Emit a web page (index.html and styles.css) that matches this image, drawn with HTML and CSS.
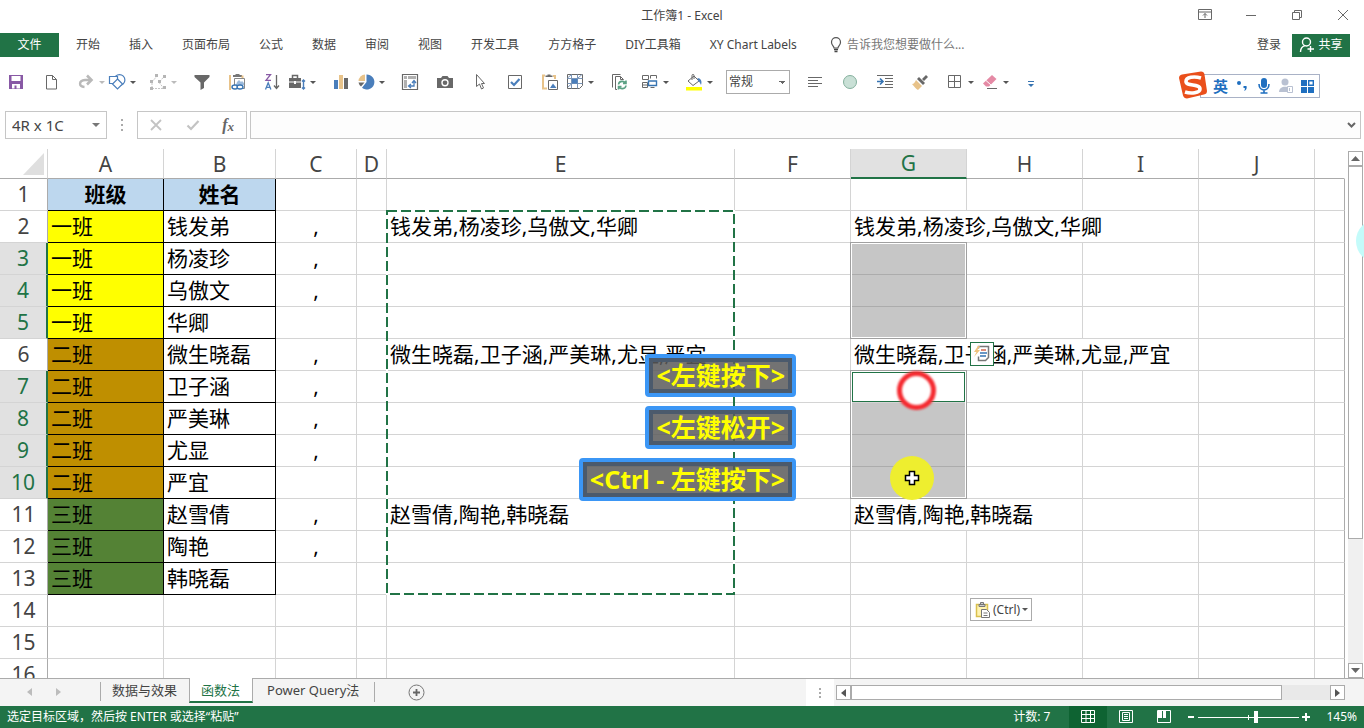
FILE: index.html
```html
<!DOCTYPE html>
<html lang="zh-CN">
<head>
<meta charset="utf-8">
<title>工作簿1 - Excel</title>
<link rel="stylesheet" href="styles.css">
</head>
<body>
<header class="titlebar">
  <h1 class="title">工作簿1 - Excel</h1>
  <div class="window-buttons">
    <button aria-label="功能区显示选项"><svg width="14" height="12" viewBox="0 0 14 12"><path d="M.5.5h13v10H.5zM.5 3h13M7 9V4.500M5 6.500l2-2 2 2" class="ln"/></svg></button>
    <button aria-label="最小化"><svg width="12" height="12" viewBox="0 0 12 12"><path d="M1 6.500h10" class="ln"/></svg></button>
    <button aria-label="还原"><svg width="12" height="12" viewBox="0 0 12 12"><path d="M1.500 3.500h7v7h-7zM3.500 3.500v-2h7v7h-2" class="ln"/></svg></button>
    <button aria-label="关闭"><svg width="12" height="12" viewBox="0 0 12 12"><path d="M1 1l10 10M11 1L1 11" class="ln"/></svg></button>
  </div>
</header>

<nav class="ribbon">
  <button class="file-tab">文件</button>
  <div class="ribbon-tabs">
    <button>开始</button><button>插入</button><button>页面布局</button><button>公式</button><button>数据</button><button>审阅</button><button>视图</button><button>开发工具</button><button>方方格子</button><button>DIY工具箱</button><button>XY Chart Labels</button>
    <button class="tell-me"><svg width="12" height="16" viewBox="0 0 12 16"><path d="M4 11C4 9 1.500 8.500 1.500 5.200a4.500 4.500 0 0 1 9 0C10.500 8.500 8 9 8 11z" fill="none" stroke="#555" stroke-width="1.200"/><path d="M4 12.500h4M4.500 14.500h3" fill="none" stroke="#444" stroke-width="1.300"/></svg>告诉我您想要做什么...</button>
  </div>
  <button class="login">登录</button>
  <button class="share"><svg width="16" height="16" viewBox="0 0 16 16"><g fill="none" stroke="#fff" stroke-width="1.400"><circle cx="7.500" cy="5" r="4"/><path d="M1.500 15c0-3.500 2-5.500 4.500-6.300M11.500 9v6M8.500 12h6.500"/></g></svg>共享</button>
</nav>

<div class="toolbar">
  <button class="tool" aria-label="保存"><svg width="18" height="18" viewBox="0 0 18 18"><path d="M2 2h14v14H2z" fill="#8859a5"/><path d="M4.500 3h9v5h-9zM5 11h8v4.500H9.500V12.500H7.500v3H5z" fill="#fff"/></svg></button>
  <button class="tool" aria-label="新建"><svg width="18" height="18" viewBox="0 0 18 18"><path d="M4.500 2.500h6l4 4v9.500h-10zM10.500 2.500v4h4" class="ln"/></svg></button>
  <button class="tool tool-snug" aria-label="重做"><svg width="18" height="18" viewBox="0 0 18 18"><path d="M13 7H8C1.500 7.500 1.500 13.500 7.500 14" fill="none" stroke="#b9b9b9" stroke-width="2.400"/><path d="M10 2.500L14.500 7 10 11.500" fill="none" stroke="#b9b9b9" stroke-width="2.600"/></svg><i class="caret caret-off"></i></button>
  <button class="tool tool-split-s" aria-label="形状"><svg width="18" height="18" viewBox="0 0 18 18"><g fill="#fff" stroke="#4a7ebb" stroke-width="1.200"><circle cx="11.500" cy="7" r="5.400"/><path d="M1.500 3.500h8v7h-8z"/><path d="M9.500 6l5 5-5 5-5-5z"/></g></svg><i class="caret"></i></button>
  <button class="tool tool-split" aria-label="编辑顶点"><svg width="18" height="18" viewBox="0 0 18 18"><path d="M3 15V9l5-6M3 15.500h12l-5-6 5-6" fill="none" stroke="#c5c5c5" stroke-dasharray="2 1"/><path d="M1 7h3v3H1zM6 1h3v3H6zM14 2h3v3h-3zM9 7h3v3H9zM1 14h3v3H1zM14 13h3v3h-3z" fill="#b5b5b5"/></svg><i class="caret caret-off"></i></button>
  <button class="tool" aria-label="筛选"><svg width="18" height="18" viewBox="0 0 18 18"><path d="M1.500 2h15v2L11 9.500V15l-3.500 2V9.500L1.500 4z" fill="#686868"/></svg></button>
  <button class="tool" aria-label="粘贴链接"><svg width="18" height="18" viewBox="0 0 18 18"><path d="M1 2h2v15H1z" fill="#e8c38a"/><path d="M5 3h9" stroke="#777" stroke-width="2"/><path d="M7.500 1h4v2h-4z" fill="#777"/><path d="M14.500 2.500v3" stroke="#e8c38a" stroke-width="2"/><path d="M6.500 5.500h10v10h-10z" fill="#fff" stroke="#888"/><path d="M9 9l2-2 2 2 1-1 2 2v2H8z" fill="#9dbbdc"/><g fill="#fff" stroke="#3774b2" stroke-width="1.400"><ellipse cx="7" cy="14" rx="3" ry="2"/><ellipse cx="12" cy="14" rx="3" ry="2"/></g></svg></button>
  <button class="tool tool-near" aria-label="降序"><svg width="18" height="18" viewBox="0 0 18 18"><path d="M3 1.700h4.500l-4.500 5.600h5" fill="none" stroke="#8859a5" stroke-width="1.300"/><path d="M2.500 16.500l2.700-6.800 2.700 6.800M3.500 14.300h3.500" fill="none" stroke="#4a7ebb" stroke-width="1.300"/><path d="M13.500 2v13.500M11 12.500l2.500 3 2.500-3" fill="none" stroke="#666" stroke-width="1.300"/></svg></button>
  <button class="tool tool-split" aria-label="工具箱"><svg width="18" height="18" viewBox="0 0 18 18"><path d="M1 5h12v3.500H1zM1 9.500h12V15H1z" fill="#686868"/><path d="M4.500 5V2.500h5V5" fill="none" stroke="#686868" stroke-width="1.500"/><path d="M6 8h2v3H6z" fill="#fff"/><path d="M15.500 7v9M14 8.500L15.500 7 17 8.500M14 14.500l1.500 1.500 1.500-1.500" fill="none" stroke="#4a7ebb" stroke-width="1.400"/></svg><i class="caret"></i></button>
  <button class="tool tool-near" aria-label="柱形图"><svg width="18" height="18" viewBox="0 0 18 18"><path d="M2 7h4v9H2z" fill="#4a7ebb"/><path d="M7 2h4v14H7z" fill="#e8c38a"/><path d="M12 5h4v11h-4z" fill="#686868"/></svg></button>
  <button class="tool tool-split" aria-label="饼图"><svg width="18" height="18" viewBox="0 0 18 18"><path d="M9.500 1.500a7.500 7.500 0 1 1-4.500 13.200L9.500 9z" fill="#4a7ebb"/><path d="M8 1.500V8H1.500A7 7 0 0 1 8 1.500z" fill="#e8c38a"/><path d="M1.500 9.500H7.500L4 13.500a7 7 0 0 1-2.500-4z" fill="#686868"/></svg><i class="caret"></i></button>
  <button class="tool" aria-label="数据透视表"><svg width="18" height="18" viewBox="0 0 18 18"><path d="M1.500 1.500h15v15h-15z" fill="#fff" stroke="#686868" stroke-width="1.200"/><path d="M3 3h3v3H3zM7 3h8v3H7zM3 7h3v8H3z" fill="#b0b0b0"/><path d="M8 13h5V8M11 10l2-2.500 2 2.500M10 11l-2.500 2L10 15" fill="none" stroke="#4a7ebb" stroke-width="1.300"/></svg></button>
  <button class="tool" aria-label="照相机"><svg width="18" height="18" viewBox="0 0 18 18"><path d="M1 5h4l1.500-2h5L13 5h4v10H1z" fill="#686868"/><circle cx="9" cy="9.700" r="3.700" fill="#fff"/><circle cx="9" cy="9.700" r="2.300" fill="#686868"/></svg></button>
  <button class="tool" aria-label="选择对象"><svg width="18" height="18" viewBox="0 0 18 18"><path d="M5.500 1.500v12l3-2.500 2 5 2-1-2-4.500h3z" class="ln"/></svg></button>
  <button class="tool" aria-label="复选框"><svg width="18" height="18" viewBox="0 0 18 18"><path d="M2.500 2.500h13v13h-13z" class="ln"/><path d="M5 9l3 3 5.500-6" fill="none" stroke="#4a7ebb" stroke-width="2.200"/></svg></button>
  <button class="tool tool-near" aria-label="粘贴图片"><svg width="18" height="18" viewBox="0 0 18 18"><path d="M4 2.500H2v13h4M12 3h2v3" fill="none" stroke="#e8c38a" stroke-width="2"/><path d="M4.500 4V2.500h2v-1h3v1h2V4z" fill="#686868"/><path d="M7.500 7.500h9v9h-9z" fill="#fff" stroke="#686868"/><path d="M9 15l3-4.500 3.500 4.500z" fill="#4a7ebb"/></svg></button>
  <button class="tool tool-split" aria-label="表格样式"><svg width="18" height="18" viewBox="0 0 18 18"><path d="M1.500 1.500h15v11l-3 3h-12z" class="ln"/><path d="M1.500 5.500h15M1.500 10.500h15M5.500 1.500v14M11.500 1.500v14M1.500 5l4-3.500M12 5l4-3.500M2 14l4-3.500" fill="none" stroke="#7a95b8"/><path d="M6 6h5.500v4.500H6z" fill="#4a7ebb"/></svg><i class="caret"></i></button>
  <button class="tool tool-snug" aria-label="刷新"><svg width="18" height="18" viewBox="0 0 18 18"><path d="M2.500 14.500v-13h8M7 16.500H5.500v-13h5l3 3M10.500 3.500v3h3" class="ln"/><path d="M8.500 11.500c.5-4 6-4 7-1M16 7.500v3h-3M16 12.500c-.5 4-6 4-7 1M8.500 16.500v-3h3" fill="none" stroke="#5ba184" stroke-width="1.600"/></svg></button>
  <button class="tool tool-split" aria-label="窗体"><svg width="18" height="18" viewBox="0 0 18 18"><path d="M1.500 2.500h6v4h-6zM9.500 5.500v-3h6v3M1.500 9.500h5v5h-5zM1.500 12h5M9.500 14.500h4" class="ln"/><path d="M7.500 8h8v4.500h-8z" fill="#fff" stroke="#3774b2" stroke-width="1.400"/></svg><i class="caret"></i></button>
  <button class="tool tool-split-s" aria-label="填充颜色"><svg width="18" height="18" viewBox="0 0 18 18"><path d="M9 3l5 5-6 4.500L3 8zM7 7V2.500c0-1.500 2-1.500 2 0V6" class="ln"/><path d="M12.500 5c3 0 5 3 3.500 7-1-2-1-3-3-4z" fill="#4a7ebb"/><path d="M1 14h16v3.500H1z" fill="#ff0"/></svg><i class="caret"></i></button>
  <select class="format" aria-label="数字格式"><option>常规</option></select>
  <button class="tool" aria-label="左对齐"><svg width="18" height="18" viewBox="0 0 18 18"><path d="M2 4.500h14M2 7.500h10M2 10.500h14M2 13.500h10" class="ln"/></svg></button>
  <button class="tool" aria-label="圆形"><svg width="18" height="18" viewBox="0 0 18 18"><circle cx="9" cy="9" r="6.500" fill="#c9e0d6" stroke="#84b09d"/></svg></button>
  <button class="tool" aria-label="增加缩进"><svg width="18" height="18" viewBox="0 0 18 18"><path d="M1 2.500h16M9 5.500h8M9 8.500h8M9 11.500h8M1 14.500h16" class="ln"/><path d="M1 8.500h5M4 5.500l3 3-3 3" fill="none" stroke="#3774b2" stroke-width="1.600"/></svg></button>
  <button class="tool" aria-label="格式刷"><svg width="18" height="18" viewBox="0 0 18 18"><path d="M5 7l6 6-4 4C5 16 3 13 1 11c2 0 3-2 4-4z" fill="#e8c38a"/><path d="M6 6l2-2 6 6-2 2z" fill="#686868"/><path d="M11 6l4-4 2 2-4 4z" fill="#686868"/></svg></button>
  <button class="tool" aria-label="边框"><svg width="18" height="18" viewBox="0 0 18 18"><path d="M2.500 2.500h12v12h-12zM8.500 2.500v12M2.500 8.500h12" class="ln"/></svg><i class="caret"></i></button>
  <button class="tool tool-split-s" aria-label="清除"><svg width="18" height="18" viewBox="0 0 18 18"><path d="M11 2l4.500 4L8 13.500H5l-3-3z" fill="#e58aa5"/><path d="M5 7.500l5 4.500" stroke="#fff"/><path d="M6 15.500h10" class="ln"/></svg><i class="caret"></i></button>
  <button class="tool" aria-label="自定义快速访问工具栏"><svg width="18" height="18" viewBox="0 0 18 18"><path d="M6 8.500h6" stroke="#3774b2"/><path d="M6 11h6l-3 3z" fill="#3774b2"/></svg></button>

  <div class="ime">
    <svg class="ime-logo" width="30" height="28" viewBox="0 0 30 28"><path d="M4 3.500L23 .5q3 0 3.500 3L29 20q0 3-3 3.500L9 27.500q-3 0-4-3L1 7q0-3 3-3.500z" fill="#ea4f1b"/><path d="M23 7C16 5 8 6 8 10.500c0 5 14 2 14 7.500 0 4-9 5-15 3" fill="none" stroke="#fff" stroke-width="3.600"/></svg>
    <button class="ime-mode">英</button>
    <button aria-label="标点"><svg width="16" height="16" viewBox="0 0 16 16"><circle cx="5" cy="5" r="2" fill="#1f6fc0"/><path d="M9.500 8h3c.6 2.500 0 4-2.500 5 .8-1.200 1-2 .8-3H9.500z" fill="#1f6fc0"/></svg></button>
    <button aria-label="语音"><svg width="16" height="16" viewBox="0 0 16 16"><rect x="5" y="0" width="6" height="10" rx="3" fill="#1f6fc0"/><path d="M3 6c0 8 10 8 10 0M8 12v3M4.500 15h7" fill="none" stroke="#1f6fc0" stroke-width="1.600"/></svg></button>
    <button aria-label="用户"><svg width="16" height="16" viewBox="0 0 16 16"><circle cx="7" cy="4" r="3.500" fill="#b9c1d2"/><path d="M1 14c0-7 12-7 12 0z" fill="#b9c1d2"/><path d="M9.500 8.500h5v6h-5z" fill="#fff" stroke="#b9c1d2"/><path d="M11.500 10v3" stroke="#b9c1d2"/></svg></button>
    <button aria-label="工具"><svg width="16" height="16" viewBox="0 0 16 16"><path d="M1 2h6v6H1zM1 9h6v6H1zM8 9h6v6H8z" fill="#1f6fc0"/><path d="M8.700 2.700h4.600v4.600H8.700z" fill="#fff" stroke="#1f6fc0" stroke-width="1.400"/></svg></button>
  </div>
</div>

<div class="formula-bar">
  <div class="name-box"><input aria-label="名称框" value="4R x 1C"><i class="caret"></i></div>
  <svg class="grip" width="4" height="14" viewBox="0 0 4 14"><path d="M1 1h2v2H1zM1 6h2v2H1zM1 11h2v2H1z" fill="#aaa"/></svg>
  <div class="fx-box">
    <button aria-label="取消"><svg width="14" height="14" viewBox="0 0 14 14"><path d="M2 2l10 10M12 2L2 12" fill="none" stroke="#c3c3c3" stroke-width="1.800"/></svg></button>
    <button aria-label="输入"><svg width="14" height="14" viewBox="0 0 14 14"><path d="M1.500 7.500L5 11l7.500-8" fill="none" stroke="#c3c3c3" stroke-width="2.200"/></svg></button>
    <button class="fx">f<small>x</small></button>
  </div>
  <div class="formula"><input aria-label="编辑栏"><svg width="9" height="7" viewBox="0 0 9 7"><path d="M1 1l3.500 3.500L8 1" fill="none" stroke="#666" stroke-width="2"/></svg></div>
</div>

<main class="sheet">
  <div class="grid-area">
    <table class="grid">
      <colgroup><col class="c-head"><col class="c-std"><col class="c-b"><col class="c-c"><col class="c-d"><col class="c-e"><col class="c-std"><col class="c-std"><col class="c-std"><col class="c-std"><col class="c-std"><col></colgroup>
      <thead><tr><th class="corner"><svg width="21" height="22" viewBox="0 0 21 22"><path d="M21 0v22H0z" fill="#dfdfdf"/></svg></th><th>A</th><th>B</th><th>C</th><th>D</th><th>E</th><th>F</th><th class="col-on">G</th><th>H</th><th>I</th><th>J</th><th></th></tr></thead>
      <tbody>
      <tr><th>1</th><td class="box head">班级</td><td class="box head">姓名</td><td></td><td></td><td></td><td></td><td></td><td></td><td></td><td></td><td></td></tr>
      <tr><th>2</th><td class="box one">一班</td><td class="box">钱发弟</td><td class="mid">,</td><td></td><td>钱发弟,杨凌珍,乌傲文,华卿</td><td></td><td colspan="3">钱发弟,杨凌珍,乌傲文,华卿</td><td></td><td></td></tr>
      <tr><th class="row-on">3</th><td class="box one">一班</td><td class="box">杨凌珍</td><td class="mid">,</td><td></td><td></td><td></td><td class="sel"></td><td></td><td></td><td></td><td></td></tr>
      <tr><th class="row-on">4</th><td class="box one">一班</td><td class="box">乌傲文</td><td class="mid">,</td><td></td><td></td><td></td><td class="sel"></td><td></td><td></td><td></td><td></td></tr>
      <tr><th class="row-on">5</th><td class="box one">一班</td><td class="box">华卿</td><td></td><td></td><td></td><td></td><td class="sel"></td><td></td><td></td><td></td><td></td></tr>
      <tr><th>6</th><td class="box two">二班</td><td class="box">微生晓磊</td><td class="mid">,</td><td></td><td>微生晓磊,卫子涵,严美琳,尤显,严宜</td><td></td><td colspan="3">微生晓磊,卫子涵,严美琳,尤显,严宜</td><td></td><td></td></tr>
      <tr><th class="row-on">7</th><td class="box two">二班</td><td class="box">卫子涵</td><td class="mid">,</td><td></td><td></td><td></td><td></td><td></td><td></td><td></td><td></td></tr>
      <tr><th class="row-on">8</th><td class="box two">二班</td><td class="box">严美琳</td><td class="mid">,</td><td></td><td></td><td></td><td class="sel"></td><td></td><td></td><td></td><td></td></tr>
      <tr><th class="row-on">9</th><td class="box two">二班</td><td class="box">尤显</td><td class="mid">,</td><td></td><td></td><td></td><td class="sel"></td><td></td><td></td><td></td><td></td></tr>
      <tr><th class="row-on">10</th><td class="box two">二班</td><td class="box">严宜</td><td></td><td></td><td></td><td></td><td class="sel"></td><td></td><td></td><td></td><td></td></tr>
      <tr><th>11</th><td class="box three">三班</td><td class="box">赵雪倩</td><td class="mid">,</td><td></td><td>赵雪倩,陶艳,韩晓磊</td><td></td><td colspan="2">赵雪倩,陶艳,韩晓磊</td><td></td><td></td><td></td></tr>
      <tr><th>12</th><td class="box three">三班</td><td class="box">陶艳</td><td class="mid">,</td><td></td><td></td><td></td><td></td><td></td><td></td><td></td><td></td></tr>
      <tr><th>13</th><td class="box three">三班</td><td class="box">韩晓磊</td><td></td><td></td><td></td><td></td><td></td><td></td><td></td><td></td><td></td></tr>
      <tr><th>14</th><td></td><td></td><td></td><td></td><td></td><td></td><td></td><td></td><td></td><td></td><td></td></tr>
      <tr><th>15</th><td></td><td></td><td></td><td></td><td></td><td></td><td></td><td></td><td></td><td></td><td></td></tr>
      <tr><th>16</th><td></td><td></td><td></td><td></td><td></td><td></td><td></td><td></td><td></td><td></td><td></td></tr>
      </tbody>
    </table>
    <svg class="copy-outline" width="349" height="385" viewBox="0 0 349 385"><path d="M1 1h347v383H1z" fill="none" stroke="#fff" stroke-width="2"/><path d="M1 1h347v383H1z" fill="none" stroke="#217346" stroke-width="2" stroke-dasharray="10 4"/></svg>
    <div class="range range-top"></div>
    <div class="range range-bottom"></div>
    <div class="active-cell"></div>
    <button class="quick" aria-label="快速分析"><svg width="20" height="20" viewBox="0 0 20 20"><path d="M6.500 4.500V2.500h10v11l-3 3h-7v-4" fill="#fff" stroke="#777" stroke-width="1.500"/><path d="M9 6h5" stroke="#d0674e" stroke-width="1.500"/><path d="M8 9h7M8 12h6" stroke="#3774b2" stroke-width="1.500"/><path d="M6 2L2 8h2.500L2 13l6-7H5.500L8 2z" fill="#f0c27b"/></svg></button>
    <button class="paste-options"><svg width="16" height="18" viewBox="0 0 16 18"><path d="M1.500 3.500h11v12h-11z" fill="#fff3b0" stroke="#d9c04e" stroke-width="1.500"/><path d="M4 3.500h6v2H4zM5.500 1.500h3v2h-3z" fill="#ccc" stroke="#777"/><path d="M6.500 8.500h5l3 3v5h-8z" fill="#fff" stroke="#777"/><path d="M8.500 12h4M8.500 14.500h4" stroke="#777"/></svg>(Ctrl)<i class="caret"></i></button>
    <div class="keys"><kbd>&lt;左键按下&gt;</kbd><kbd>&lt;左键松开&gt;</kbd><kbd>&lt;Ctrl - 左键按下&gt;</kbd></div>
    <div class="click-ring"></div>
    <div class="pointer"><svg width="16" height="16" viewBox="0 0 16 16"><path d="M5.500 1.500h5v4h4v5h-4v4h-5v-4h-4v-5h4z" fill="#fff" stroke="#000" stroke-width="1.500"/></svg></div>
  </div>
  <div class="vscroll">
    <button aria-label="向上滚动"><svg width="9" height="5" viewBox="0 0 9 5"><path d="M0 5l4.500-5L9 5z" fill="#666"/></svg></button>
    <div class="vtrack"><div class="vthumb"></div></div>
    <button aria-label="向下滚动"><svg width="9" height="5" viewBox="0 0 9 5"><path d="M0 0h9L4.500 5z" fill="#666"/></svg></button>
  </div>
  <div class="edge-glow"></div>
</main>

<footer class="sheet-tabs">
  <div class="tab-nav">
    <button aria-label="上一个工作表"><svg width="5" height="8" viewBox="0 0 5 8"><path d="M5 0v8L0 4z" fill="#bcbcbc"/></svg></button>
    <button aria-label="下一个工作表"><svg width="5" height="8" viewBox="0 0 5 8"><path d="M0 0v8l5-4z" fill="#bcbcbc"/></svg></button>
  </div>
  <button class="tab">数据与效果</button>
  <button class="tab tab-on">函数法</button>
  <button class="tab tab-last">Power Query法</button>
  <button class="add" aria-label="新工作表"><svg width="17" height="17" viewBox="0 0 17 17"><circle cx="8.500" cy="8.500" r="7.500" fill="none" stroke="#777"/><path d="M8.500 5v7M5 8.500h7" stroke="#666" stroke-width="1.800"/></svg></button>
  <div class="split-grip"><svg width="4" height="12" viewBox="0 0 4 12"><path d="M1 1h2v2H1zM1 5h2v2H1zM1 9h2v2H1z" fill="#aaa"/></svg></div>
  <div class="hscroll">
    <button aria-label="向左滚动"><svg width="5" height="8" viewBox="0 0 5 8"><path d="M5 0v8L0 4z" fill="#555"/></svg></button>
    <div class="htrack"><div class="hthumb"></div></div>
    <button aria-label="向右滚动"><svg width="5" height="8" viewBox="0 0 5 8"><path d="M0 0v8l5-4z" fill="#555"/></svg></button>
  </div>
</footer>

<div class="status">
  <span class="message">选定目标区域，然后按 ENTER 或选择“粘贴”</span>
  <span class="count">计数: 7</span>
  <div class="views">
    <button class="view-on" aria-label="普通"><svg width="14" height="14" viewBox="0 0 14 14"><path d="M.5.5h13v12H.5zM5 .5v12M9.500.5v12M.5 4.500h13M.5 8.500h13" fill="none" stroke="#fff"/></svg></button>
    <button aria-label="页面布局"><svg width="14" height="14" viewBox="0 0 14 14"><path d="M.5.5h13v12H.5zM3.500 2.500h7v8h-7zM5 4.500h4M5 6.500h4M5 8.500h4" fill="none" stroke="#fff"/></svg></button>
    <button aria-label="分页预览"><svg width="14" height="14" viewBox="0 0 14 14"><path d="M.5.5h13v12H.5z" fill="none" stroke="#fff"/><path d="M1 1h4v7H1zM6 1h3v7H6z" fill="#fff"/></svg></button>
  </div>
  <div class="zoom">
    <button aria-label="缩小"><svg width="8" height="8" viewBox="0 0 8 8"><path d="M1 4h6" stroke="#fff" stroke-width="2"/></svg></button>
    <input type="range" min="0" max="100" value="57" aria-label="缩放">
    <button aria-label="放大"><svg width="8" height="8" viewBox="0 0 8 8"><path d="M0 4h8M4 0v8" stroke="#fff" stroke-width="2"/></svg></button>
  </div>
  <button class="percent">145%</button>
</div>
</body>
</html>
```
FILE: styles.css
```css
* { box-sizing: border-box; }
html, body { height: 100%; }
body {
  margin: 0;
  display: flex;
  flex-direction: column;
  overflow: hidden;
  background: #fff;
  color: #444;
  font: 12px/16px "Noto Sans", "Noto Sans CJK SC", sans-serif;
}
button, input, select { font: inherit; color: inherit; }
button {
  border: 0;
  padding: 0;
  background: none;
  display: flex;
  align-items: center;
  white-space: nowrap;
}
svg { display: block; flex: none; }
.ln { fill: none; stroke: #686868; stroke-width: 1; }

.titlebar { position: relative; flex: none; height: 32px; display: flex; align-items: center; justify-content: center; }
.title { margin: 0; font-size: 12px; font-weight: 400; }
.window-buttons { position: absolute; right: 0; top: 0; height: 30px; display: flex; }
.window-buttons button { width: 46px; padding-left: 4px; justify-content: center; }

.ribbon { flex: none; height: 26px; padding-right: 14px; display: flex; align-items: center; }
.file-tab { width: 59px; height: 24px; justify-content: center; background: #217346; color: #fff; }
.ribbon-tabs { flex: 1; padding-left: 17px; display: flex; gap: 29px; }
.tell-me { gap: 5px; padding-left: 4px; color: #777; }
.login { margin-right: 11px; }
.share { width: 58px; height: 23px; justify-content: center; gap: 3px; background: #217346; color: #fff; }

.toolbar { position: relative; flex: none; height: 48px; padding-left: 7px; display: flex; align-items: center; }
.tool { width: 35px; height: 24px; gap: 4px; flex: none; }
.tool-near { width: 25px; }
.tool-snug { width: 31px; }
.tool-split-s { width: 41px; }
.tool-split { width: 44px; }
.caret { flex: none; border: 3px solid transparent; border-top-color: #555; border-bottom: 0; }
.caret-off { border-top-color: #bbb; }
.format {
  appearance: none;
  width: 64px;
  height: 24px;
  margin-right: 16px;
  padding: 0 2px;
  border: 1px solid #ababab;
  border-radius: 0;
  background: linear-gradient(to bottom left, #666 50%, transparent 50%) no-repeat right 7px center / 3px 3px,
    linear-gradient(to bottom right, #666 50%, transparent 50%) no-repeat right 4px center / 3px 3px, #fff;
}
.ime { position: absolute; left: 1200px; top: 16px; height: 24px; width: 120px; padding-left: 12px; border: 1px solid #a9b2c6; background: #fff; display: flex; gap: 6px; align-items: center; }
.ime-logo { position: absolute; left: -23px; top: -4px; }
.ime-mode { color: #1f6fc0; font-size: 15px; font-weight: 700; }

.formula-bar { flex: none; height: 43px; padding: 5px 3px 10px 5px; display: flex; align-items: stretch; }
.name-box { width: 102px; border: 1px solid #c6c6c6; display: flex; align-items: center; padding-right: 6px; }
.name-box .caret { border-width: 4px 4px 0; border-top-color: #777; }
.name-box input, .formula input { flex: 1; min-width: 0; border: 0; padding: 0 6px; background: none; font-size: 15px; outline: 0; }
.grip { align-self: center; margin: 0 13px; }
.fx-box { width: 110px; border: 1px solid #c6c6c6; display: flex; justify-content: space-between; padding: 0 12px 0 11px; }
.fx { font: italic 700 16px/20px "Liberation Serif", serif; color: #666; }
.fx small { font-size: 13px; padding-top: 4px; }
.formula { flex: 1; margin-left: 3px; padding-right: 4px; border: 1px solid #c6c6c6; background: #fdfdfd; display: flex; align-items: center; }

.sheet { position: relative; flex: 1; min-height: 0; overflow: hidden; display: flex; }
.grid-area { position: relative; flex: 1; min-width: 0; overflow: hidden; }
.grid { width: 100%; table-layout: fixed; border-spacing: 0; font-size: 21px; line-height: 30px; color: #000; }
.c-head { width: 48px; }
.c-std { width: 116px; }
.c-b { width: 112px; }
.c-c { width: 81px; }
.c-d { width: 30px; }
.c-e { width: 348px; }
.grid th, .grid td { height: 32px; padding: 0 0 1px 3px; border: solid #d4d4d4; border-width: 0 1px 1px 0; white-space: nowrap; text-align: left; font-weight: 400; }
.grid th { padding: 0 0 2px; text-align: center; color: #444; line-height: 28px; }
.grid thead th { height: 30px; padding: 0; line-height: 28px; border-bottom-color: #ababab; }
.grid tbody th { border-right-color: #ababab; }
.grid th:last-child, .grid td:last-child { border-right-color: #ababab; }
.grid thead th:last-child { border-right-color: transparent; }
.grid thead .col-on { background: #e1e1e1; color: #217346; border-bottom: 2px solid #217346; }
.grid tbody .row-on { background: #e1e1e1; color: #217346; border-right: 2px solid #217346; }
.grid thead .corner { padding-left: 23px; }
.grid .box { border-color: #000; }
.grid .head { background: #bdd7ee; padding-left: 0; text-align: center; font-weight: 700; }
.grid .one { background: #ff0; }
.grid .two { background: #bf8f00; }
.grid .three { background: #548235; }
.grid .mid { text-align: center; padding-left: 0; }
.grid .sel { background: #c6c6c6; border-bottom-color: #acacac; }

.copy-outline { position: absolute; left: 386px; top: 61px; }
.range { position: absolute; left: 850px; width: 117px; border: 1px solid #a0a0a0; box-shadow: inset 0 0 0 1px #fff; }
.range-top { top: 93px; height: 97px; }
.range-bottom { top: 221px; height: 129px; }
.active-cell { position: absolute; left: 852px; top: 223px; width: 113px; height: 30px; border: 1px solid #217346; }
.quick { position: absolute; left: 970px; top: 193px; width: 24px; height: 24px; border: 1px solid #217346; background: #fff; justify-content: center; }
.paste-options { position: absolute; left: 970px; top: 449px; height: 23px; padding: 0 3px 0 4px; border: 1px solid #ababab; background: #fff; gap: 2px; }
.keys { position: absolute; right: 549px; top: 205px; display: flex; flex-direction: column; align-items: flex-end; gap: 9px; }
.keys kbd {
  border: 4px solid #3b96f5;
  border-radius: 4px;
  box-shadow: inset 0 0 0 4px #4b5a6c;
  background: rgba(90, 90, 90, .85);
  padding: 0 7px 1px;
  color: #ff0;
  font: 700 25px/34px "Noto Sans", "Noto Sans CJK SC", sans-serif;
  white-space: nowrap;
}
.click-ring { position: absolute; left: 897px; top: 222px; width: 39px; height: 39px; border: 5px solid #f5292f; border-radius: 50%; background: #fff; filter: blur(1px); }
.pointer { position: absolute; left: 890px; top: 307px; width: 44px; height: 44px; border-radius: 50%; background: #eeee2f; display: flex; align-items: center; justify-content: center; }

.vscroll { width: 16px; margin: 2px 0 0 3px; padding-right: 1px; display: flex; flex-direction: column; }
.vscroll button { height: 15px; border: 1px solid #ababab; background: #fff; justify-content: center; }
.vtrack { flex: 1; background: #f0f0f0; }
.vthumb { height: 75%; border: 1px solid #ababab; background: #fff; }
.edge-glow { position: absolute; right: -36px; top: 70px; width: 44px; height: 44px; border-radius: 50%; background: #c4fbfa; }

.sheet-tabs { flex: none; height: 28px; background: #f4f4f4; border-top: 1px solid #ababab; display: flex; padding-right: 19px; font-size: 13px; }
.tab-nav { width: 101px; margin: 3px 0 5px; padding-left: 27px; border-right: 1px solid #ababab; display: flex; gap: 24px; }
.tab { height: 24px; padding: 0 12px 2px 11px; }
.tab-on { border: solid #ababab; border-width: 0 1px; border-bottom: 2px solid #217346; background: #fff; color: #217346; padding: 0 12px 0 11px; margin-top: -1px; height: 25px; }
.tab-last { height: 20px; margin-top: 3px; padding: 0 15px 5px 14px; border-right: 1px solid #ababab; }
.add { margin-left: 33px; }
.split-grip { width: 28px; margin-left: auto; background: #fff; display: flex; align-items: center; justify-content: center; }
.hscroll { flex: 0 0 509px; margin: 6px 0 6px 2px; display: flex; }
.hscroll button { width: 15px; border: 1px solid #ababab; background: #fff; justify-content: center; }
.htrack { flex: 1; background: #e9e9e9; }
.hthumb { width: 90%; height: 100%; border: 1px solid #ababab; background: #fff; }

.status { flex: none; height: 22px; padding: 0 7px; background: #217346; color: #fff; display: flex; align-items: center; }
.message { flex: 1; }
.count { margin-right: 19px; }
.views { align-self: stretch; display: flex; }
.views button { width: 38px; justify-content: center; }
.views .view-on { background: #0e6332; }
.zoom { margin-left: 4px; display: flex; align-items: center; gap: 3px; }
.zoom input {
  appearance: none;
  width: 101px;
  height: 12px;
  margin: 0;
  background: linear-gradient(#fff, #fff) no-repeat center / 1px 5px, linear-gradient(#fff, #fff) no-repeat center / 100% 1px;
}
.zoom input::-webkit-slider-thumb { appearance: none; width: 4px; height: 12px; background: #fff; }
.percent { margin-left: 16px; }
```
